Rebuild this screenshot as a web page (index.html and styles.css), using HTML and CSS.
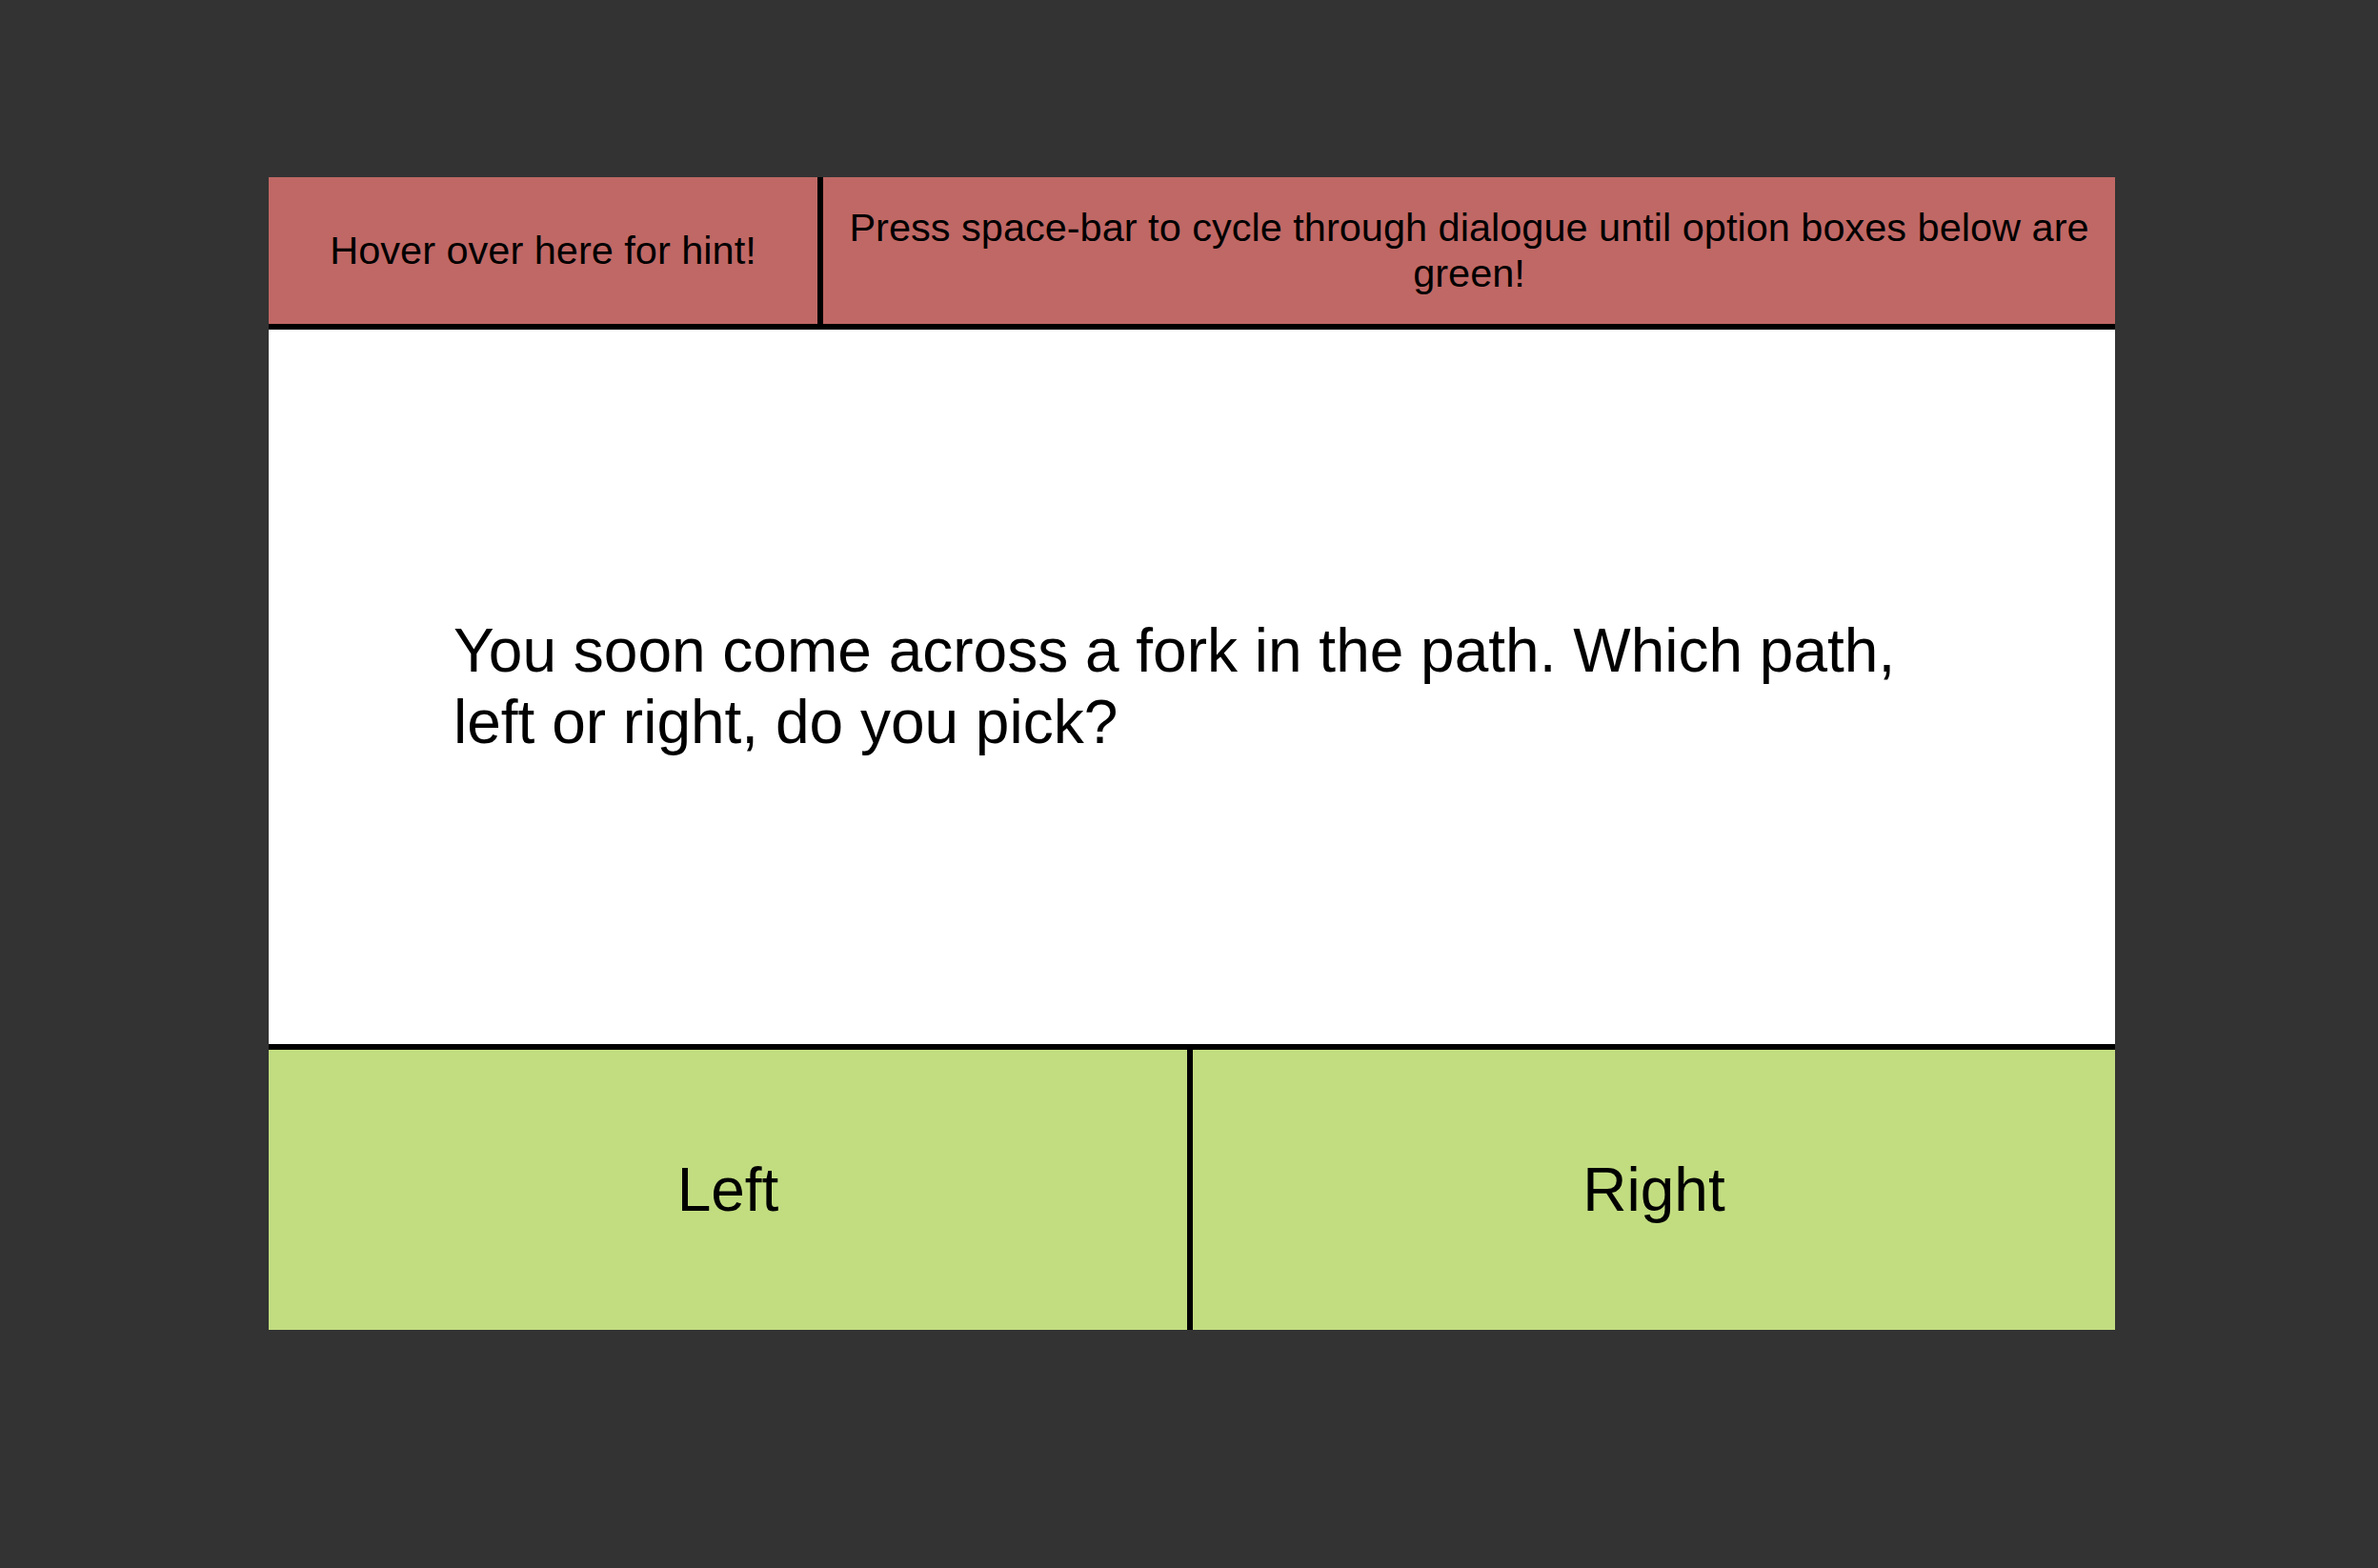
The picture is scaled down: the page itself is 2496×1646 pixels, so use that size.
FILE: index.html
```html
<!DOCTYPE html>
<html lang="en">
<head>
<meta charset="utf-8">
<title>Fork in the path</title>
<link rel="stylesheet" href="styles.css">
</head>
<body>
<main class="game">
  <header class="bar">
    <div class="hint">Hover over here for hint!</div>
    <div class="instructions">Press space-bar to cycle through dialogue until option boxes below are green!</div>
  </header>
  <section class="dialogue">
    <p class="dialogue-text">You soon come across a fork in the path. Which path, left or right, do you pick?</p>
  </section>
  <footer class="options">
    <div class="option option-left">Left</div>
    <div class="option">Right</div>
  </footer>
</main>
</body>
</html>
```
FILE: styles.css
```css
html, body {
  margin: 0;
  padding: 0;
}

body {
  background: #333333;
  width: 2496px;
  height: 1646px;
  padding: 186px 0 0 282px;
  box-sizing: border-box;
  font-family: "Liberation Sans", Arial, Helvetica, sans-serif;
  color: #000;
}

.game {
  width: 1938px;
  display: flex;
  flex-direction: column;
}

.bar {
  display: grid;
  grid-template-columns: 582px 1fr;
  height: 160px;
  background: #c06865;
  border-bottom: 6px solid #000;
  box-sizing: border-box;
  font-size: 41.5px;
  line-height: 48px;
}

.hint {
  border-right: 6px solid #000;
  display: flex;
  align-items: center;
  justify-content: center;
  text-align: center;
}

.instructions {
  display: flex;
  align-items: center;
  justify-content: center;
  text-align: center;
  padding: 0 20px;
}

.dialogue {
  height: 750px;
  background: #ffffff;
  display: flex;
  align-items: center;
  padding: 0 194px;
}

.dialogue-text {
  margin: 0;
  font-size: 64px;
  line-height: 75px;
}

.options {
  display: grid;
  grid-template-columns: 970px 1fr;
  height: 300px;
  border-top: 6px solid #000;
  box-sizing: border-box;
  background: #c2dd80;
}

.option {
  display: flex;
  align-items: center;
  justify-content: center;
  font-size: 64px;
}

.option-left {
  border-right: 6px solid #000;
}
```
